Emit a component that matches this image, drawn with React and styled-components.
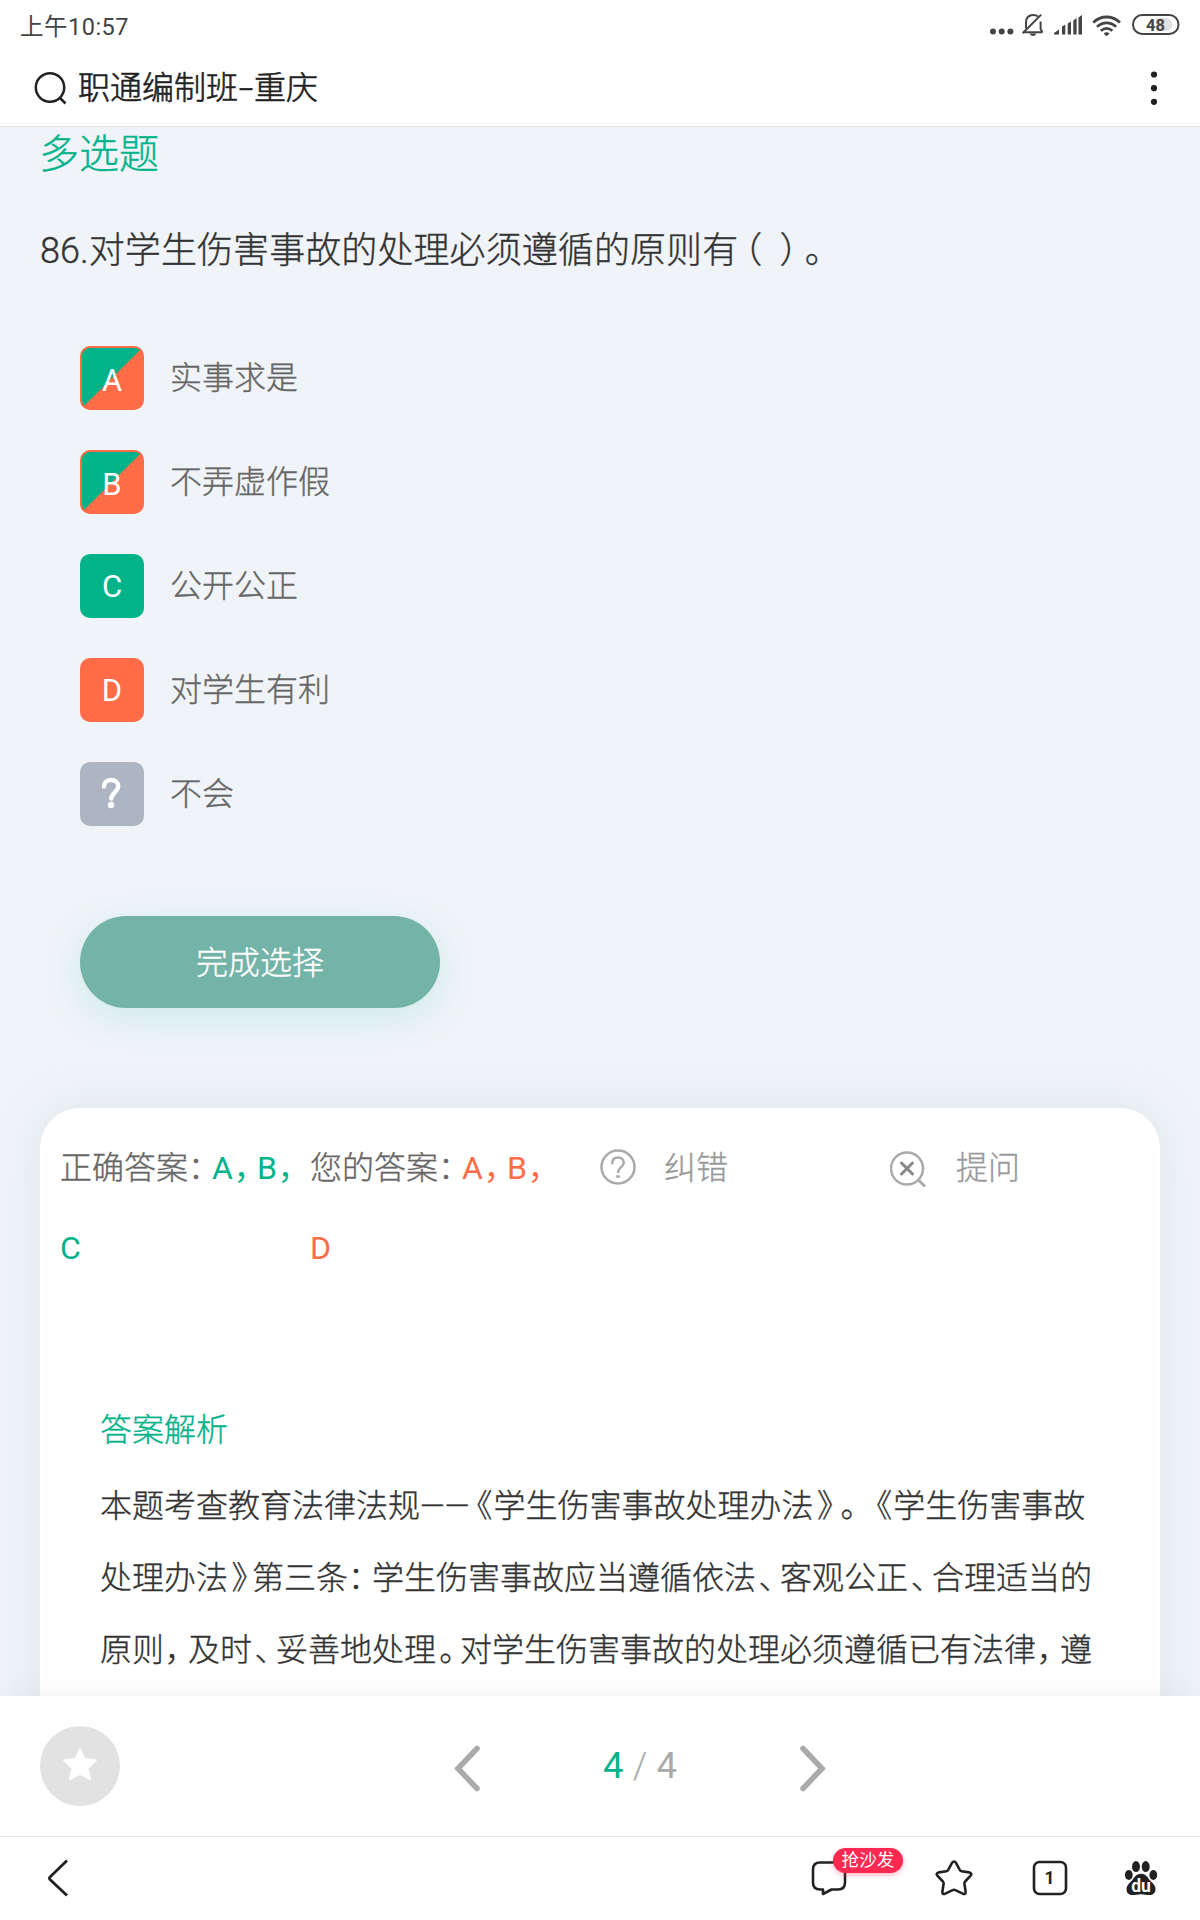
import React from 'react'
import styled, { createGlobalStyle, css } from 'styled-components'

const colors = {
  green: '#02b38a',
  orange: '#ff6c47',
  grey: '#adb5c2',
  bg: '#f0f4f8',
  ink: '#222',
}

const GlobalStyle = createGlobalStyle`
  * {
    box-sizing: border-box;
  }
  body {
    margin: 0;
    background: #fff;
    font-family: Roboto, 'Noto Sans CJK SC', sans-serif;
    font-weight: 300;
    -webkit-text-stroke: 0.35px;
  }
  svg {
    display: block;
    flex: none;
  }
`

const regular = css`
  font-weight: 400;
  -webkit-text-stroke: 0;
`

const Screen = styled.div`
  display: flex;
  flex-direction: column;
  width: 1200px;
  height: 1920px;
  overflow: hidden;
`

// Status bar
const StatusBar = styled.div`
  display: flex;
  align-items: center;
  justify-content: space-between;
  height: 50px;
  padding: 0 20px;
  color: #444;
`

const Clock = styled.span`
  ${regular}
  padding-top: 4px;
  font-size: 23.5px;
  line-height: 30px;
  letter-spacing: 0.5px;
`

// Header
const Header = styled.header`
  display: flex;
  align-items: center;
  height: 77px;
  padding: 0 38px 0 34px;
  border-bottom: 1px solid #e0e1e2;
`

const HeaderTitle = styled.h1`
  flex: 1;
  margin: 0 0 0 11px;
  font-size: 32px;
  font-weight: 300;
  line-height: 48px;
  color: ${colors.ink};
  -webkit-text-stroke: 0.6px;
`

const Dash = styled.span`
  display: inline-block;
  width: 16px;
  text-align: center;
  transform: scaleX(1.6);
`

// Question
const Content = styled.main`
  flex: 1;
  min-height: 0;
  overflow: hidden;
  background: ${colors.bg};
`

const TypeLabel = styled.h2`
  margin: 0;
  padding: 3px 39px 0;
  font-size: 40px;
  font-weight: 300;
  line-height: 50px;
  color: ${colors.green};
`

const Question = styled.p`
  margin: 44px 40px 0;
  font-size: 36px;
  line-height: 54px;
  letter-spacing: 0.08px;
  color: #333;
`

const Options = styled.ul`
  display: flex;
  flex-direction: column;
  gap: 40px;
  margin: 68px 0 0;
  padding: 0 80px;
  list-style: none;
`

const Option = styled.li`
  display: flex;
  align-items: center;
  gap: 26px;
  height: 64px;
  font-size: 32px;
  line-height: 64px;
  color: #666;
`

const markStyles = {
  both: css`
    border: 2px solid ${colors.orange};
    padding-top: 4px;
    background: linear-gradient(135deg, ${colors.green} 49.5%, ${colors.orange} 50.5%);
  `,
  correct: css`
    background: ${colors.green};
  `,
  wrong: css`
    background: ${colors.orange};
  `,
  unknown: css`
    background: ${colors.grey};
  `,
}

const Mark = styled.span`
  ${regular}
  display: flex;
  align-items: center;
  justify-content: center;
  width: 64px;
  height: 64px;
  border-radius: 10px;
  font-size: 31px;
  line-height: normal;
  color: #fff;
  ${({ $state }) => markStyles[$state]}
`

const SubmitButton = styled.button`
  display: block;
  width: 360px;
  height: 92px;
  margin: 90px 0 0 80px;
  padding: 1px 0 0;
  border: 0;
  border-radius: 46px;
  background: #74b3a8;
  box-shadow: 0 10px 40px rgba(2, 179, 138, 0.15);
  font: inherit;
  font-size: 32px;
  line-height: 90px;
  color: #fff;
  -webkit-text-stroke: inherit;
`

// Answer card
const AnswerCard = styled.section`
  height: 700px;
  margin: 100px 40px 0;
  padding: 20px 20px 0;
  border-radius: 40px;
  background: #fff;
  box-shadow: 0 0 50px rgba(150, 170, 180, 0.2);
`

const AnswerRow = styled.div`
  display: grid;
  grid-template-columns: 250px 290px 290px 1fr;
  height: 262px;
  font-size: 32px;
  line-height: 80px;
  color: #666;
`

const AnswerText = styled.div`
  width: 250px;
`

const AnswerValue = styled.span`
  ${regular}
  color: ${({ $color }) => $color};
`

const Action = styled.div`
  display: flex;
  align-items: center;
  gap: 28px;
  height: 80px;
  color: #999;
`

const Analysis = styled.div`
  padding: 0 40px;
  font-size: 32px;
`

const AnalysisTitle = styled.h3`
  margin: 0;
  font-size: 32px;
  font-weight: 300;
  line-height: 80px;
  color: ${colors.green};
`

const AnalysisText = styled.p`
  width: 1000px;
  margin: 0;
  line-height: 72px;
  color: #333;
`

// Bottom bars
const Pager = styled.div`
  position: relative;
  display: flex;
  align-items: center;
  height: 141px;
  padding: 0 40px;
  background: #fff;
  border-bottom: 1px solid #e6e6e6;
  box-shadow: 0 0 30px rgba(0, 0, 0, 0.05);
`

const FavButton = styled.span`
  display: flex;
  align-items: center;
  justify-content: center;
  width: 80px;
  height: 80px;
  margin-right: 333px;
  padding-bottom: 4px;
  border-radius: 50%;
  background: #e2e2e2;
`

const PageCount = styled.span`
  ${regular}
  display: flex;
  justify-content: space-between;
  width: 74px;
  margin: 0 122px;
  font-size: 36.5px;
  line-height: 50px;
  color: #aaa;

  b {
    font-weight: 400;
    color: ${colors.green};
  }

  i {
    font-style: normal;
    font-weight: 300;
  }
`

const NavBar = styled.nav`
  position: relative;
  display: flex;
  align-items: center;
  height: 83px;
  padding: 0 42px 1px 46px;
  background: #fff;
`

const NavItem = styled.span`
  position: relative;
  margin-left: ${({ $gap }) => $gap || 'auto'};
`

const Badge = styled.span`
  ${regular}
  position: absolute;
  top: -12px;
  left: 22px;
  width: 70px;
  height: 25px;
  border-radius: 13px;
  background: #ff2850;
  box-shadow: 0 2px 5px rgba(255, 40, 80, 0.35);
  font-size: 17.6px;
  line-height: 25px;
  text-align: center;
  white-space: nowrap;
  color: #fff;
`

const Punct = styled.span`
  padding-left: ${({ $left }) => $left}em;
  padding-right: ${({ $left }) => 0.25 - $left}em;
  font-feature-settings: 'halt';
`

// Full width punctuation takes three quarters of an em
const leftSpace = {
  '《': 0.22,
  '》': 0.11,
  '（': 0.17,
  '）': 0.15,
  '。': 0.1,
  '，': 0.02,
  '、': 0.08,
  '：': 0,
}

const Text = ({ children }) =>
  children
    .split(/([《》（）。，、：])/)
    .map((part, i) =>
      part in leftSpace ? (
        <Punct key={i} $left={leftSpace[part]}>
          {part}
        </Punct>
      ) : (
        part
      )
    )

// Icons
const StatusIcons = () => (
  <svg width="192" height="26" viewBox="0 0 192 26" fill="#444">
    <circle cx="5" cy="19.500" r="3" />
    <circle cx="13.700" cy="19.500" r="3" />
    <circle cx="22.400" cy="19.500" r="3" />
    <g fill="none" stroke="#444" strokeWidth="2">
      <path d="M36 20.300h18.300M38 16.500V10.500c0-5 3-7.600 7.200-7.600 2 0 3.400.5 4.800 1.700M52.600 9.500v7.500l1.900 3.500" />
      <path d="M34.600 21.300 53.200 2.600" />
    </g>
    <path d="M41.500 21.600h7c-.6 1.600-2 2.300-3.500 2.300s-2.900-.7-3.500-2.300z" />
    <path d="M66 22.500v-1.500l5-3.500v5zM74 22.500v-8l3.300-2v10zM79.700 22.500V11.500l3.300-2v13zM85.300 22.500V8.500l3.300-2.500v16.500zM90.500 22.500V5.500l3.500-2.500v19.500z" />
    <g fill="none" stroke="#444" strokeWidth="3">
      <path d="M105.300 10.500c7.800-7.200 18.700-7.200 26.600 0" />
      <path d="M109 14.800c5.800-5.200 13.500-5.200 19.200 0" strokeWidth="2.700" />
      <path d="M112.800 18.800c3.600-3 8-3 11.600 0" strokeWidth="2.700" />
    </g>
    <path d="M115.600 21.500c1.700-1.600 4.400-1.600 6 0l-3 2.700z" />
    <path d="M168 6h10a6.500 6.500 0 0 1 0 13h-10z" fill="#e0e0e0" />
    <rect x="145" y="3" width="45.500" height="19" rx="9.300" fill="none" stroke="#444" strokeWidth="2" />
    <text x="167.500" y="18.500" fontSize="16.500" fontWeight="700" fontFamily="Roboto" textAnchor="middle">
      48
    </text>
  </svg>
)

const SearchIcon = () => (
  <svg width="33" height="33" viewBox="0 0 33 33" fill="none" stroke={colors.ink} strokeWidth="2.500">
    <circle cx="16" cy="15.500" r="14.200" />
    <path d="m25.500 25.500 6 6" />
  </svg>
)

const MoreIcon = () => (
  <svg width="16" height="36" viewBox="0 0 16 36" fill={colors.ink}>
    <circle cx="8" cy="4.500" r="3.100" />
    <circle cx="8" cy="18.200" r="3.100" />
    <circle cx="8" cy="31.800" r="3.100" />
  </svg>
)

const UnknownIcon = () => (
  <svg width="24" height="34" viewBox="0 0 24 34" fill="none" stroke="#fff" strokeWidth="4.400" strokeLinecap="round">
    <path d="M4 9.500C4.100 5.300 7 3 11 3s7.200 2.600 7.200 6.300c0 5.200-6.600 6.500-7 12.200" />
    <circle cx="11" cy="28" r="3.200" fill="#fff" stroke="none" />
  </svg>
)

const HelpIcon = () => (
  <svg width="36" height="38" viewBox="0 0 36 38" fill="none" stroke="#aaa" strokeWidth="2.500">
    <circle cx="18" cy="18" r="16.500" />
    <path d="M12.300 14.200c0-3.700 2.300-5.700 5.700-5.700s5.700 2 5.700 5.200c0 4.300-5.500 4.600-5.500 9.300" strokeLinecap="round" />
    <path d="M16.200 27.500h3.600" />
  </svg>
)

const AskIcon = () => (
  <svg width="38" height="38" viewBox="0 0 38 38" fill="none" stroke="#aaa" strokeWidth="2.500">
    <circle cx="17" cy="19.500" r="16" />
    <path d="m28.500 31 6.500 6.500" strokeWidth="3" />
    <path d="m11.500 14 11 11m0-11-11 11" stroke="#888" strokeWidth="3" strokeLinecap="round" />
  </svg>
)

const Chevron = ({ right }) => (
  <svg width="28" height="52" viewBox="0 0 28 52" fill="none" stroke="#aaa" strokeWidth="5.500" strokeLinecap="round">
    <path d={right ? 'm4 8.500 19 20-19 20' : 'M24 8.500 5 28.500l19 20'} />
  </svg>
)

const BackIcon = () => (
  <svg width="24" height="40" viewBox="0 0 24 40" fill="none" stroke={colors.ink} strokeWidth="2.800">
    <path d="M21 2.500 4 19q-1.200 1.200 0 2.400L21 37.500" />
  </svg>
)

const SolidStar = () => (
  <svg width="36" height="34" viewBox="0 0 36 34" fill="#fff" stroke="#fff" strokeWidth="1.500" strokeLinejoin="round">
    <path d="m18 1.500 4.700 10.300 11.500 1.400-8.500 7.900 2.700 11.400L18 27l-10.400 5.500 2.700-11.400-8.500-7.900 11.500-1.400z" />
  </svg>
)

const CommentIcon = () => (
  <svg width="36" height="36" viewBox="0 0 36 36" fill="none" stroke={colors.ink} strokeWidth="2.600" strokeLinejoin="round">
    <path d="M9 2.500h18q7 0 7 7v13q0 7-7 7h-6.500L12 34V29.500H9q-7 0-7-7v-13q0-7 7-7z" />
  </svg>
)

const StarIcon = () => (
  <svg width="38" height="36" viewBox="0 0 38 36" fill="none" stroke={colors.ink} strokeWidth="2.600" strokeLinejoin="round">
    <path d="M17 2.800q2-2.600 4 0l3.800 7.200q.5 1 1.700 1.200l7.800 1.200q3.200.8 1.300 3.300l-5.500 5.800q-.8.900-.7 2l1.200 8q.2 3.200-2.800 2.200l-7.500-3.600q-1.300-.6-2.600 0l-7.500 3.600q-3 1-2.800-2.200l1.200-8q.1-1.100-.7-2l-5.500-5.800Q.5 13.200 3.700 12.400l7.800-1.200q1.200-.2 1.700-1.200z" />
  </svg>
)

const TabsIcon = () => (
  <svg width="36" height="36" viewBox="0 0 36 36" fill="none" stroke={colors.ink} strokeWidth="2.600">
    <rect x="2" y="2" width="32" height="32" rx="5.500" />
    <text x="17.500" y="24" fontSize="17.500" fontWeight="700" fontFamily="Roboto" textAnchor="middle" fill={colors.ink} stroke="none">
      1
    </text>
  </svg>
)

const PawIcon = () => (
  <svg width="34" height="36" viewBox="0 0 34 36" fill={colors.ink}>
    <ellipse cx="4.800" cy="15" rx="3.900" ry="5" />
    <ellipse cx="12" cy="6.600" rx="4" ry="5.500" />
    <ellipse cx="21.700" cy="6.600" rx="4" ry="5.500" />
    <ellipse cx="29.300" cy="15" rx="3.900" ry="5" />
    <path d="M17 13.800c5.500 0 6.500 4 9.500 7.200s5 4.500 5 8c0 4-2.500 6-6 6-3.200 0-5-.8-8.500-.8s-5.300.8-8.500.8c-3.500 0-6-2-6-6 0-3.500 2-4.800 5-8s4-7.200 9.500-7.200z" />
    <text x="17" y="32" fontSize="17.500" fontWeight="700" fontFamily="Roboto" textAnchor="middle" fill="#fff">
      du
    </text>
  </svg>
)

const options = [
  { mark: 'A', state: 'both', label: '实事求是' },
  { mark: 'B', state: 'both', label: '不弄虚作假' },
  { mark: 'C', state: 'correct', label: '公开公正' },
  { mark: 'D', state: 'wrong', label: '对学生有利' },
  { mark: null, state: 'unknown', label: '不会' },
]

const App = () => {
  return (
    <Screen>
      <GlobalStyle />
      <StatusBar>
        <Clock>上午10:57</Clock>
        <StatusIcons />
      </StatusBar>
      <Header>
        <SearchIcon />
        <HeaderTitle>
          职通编制班<Dash>-</Dash>重庆
        </HeaderTitle>
        <MoreIcon />
      </Header>

      <Content>
        <TypeLabel>多选题</TypeLabel>
        <Question>
          <Text>86.对学生伤害事故的处理必须遵循的原则有（ ）。</Text>
        </Question>
        <Options>
          {options.map(({ mark, state, label }) => (
            <Option key={label}>
              <Mark $state={state}>{mark || <UnknownIcon />}</Mark>
              {label}
            </Option>
          ))}
        </Options>
        <SubmitButton>完成选择</SubmitButton>

        <AnswerCard>
          <AnswerRow>
            <AnswerText>
              <Text>正确答案：</Text>
              <AnswerValue $color={colors.green}>
                <Text>A，B，C</Text>
              </AnswerValue>
            </AnswerText>
            <AnswerText>
              <Text>您的答案：</Text>
              <AnswerValue $color={colors.orange}>
                <Text>A，B，D</Text>
              </AnswerValue>
            </AnswerText>
            <Action>
              <HelpIcon />
              纠错
            </Action>
            <Action>
              <AskIcon />
              提问
            </Action>
          </AnswerRow>
          <Analysis>
            <AnalysisTitle>答案解析</AnalysisTitle>
            <AnalysisText>
              <Text>
                本题考查教育法律法规——《学生伤害事故处理办法》。 《学生伤害事故处理办法》第三条：学生伤害事故应当遵循依法、客观公正、合理适当的原则，及时、妥善地处理。对学生伤害事故的处理必须遵循已有法律，遵
              </Text>
            </AnalysisText>
          </Analysis>
        </AnswerCard>
      </Content>

      <Pager>
        <FavButton>
          <SolidStar />
        </FavButton>
        <Chevron />
        <PageCount>
          <b>4</b>
          <i>/</i>
          <span>4</span>
        </PageCount>
        <Chevron right />
      </Pager>
      <NavBar>
        <BackIcon />
        <NavItem>
          <CommentIcon />
          <Badge>抢沙发</Badge>
        </NavItem>
        <NavItem $gap="88px">
          <StarIcon />
        </NavItem>
        <NavItem $gap="59px">
          <TabsIcon />
        </NavItem>
        <NavItem $gap="56px">
          <PawIcon />
        </NavItem>
      </NavBar>
    </Screen>
  )
}

export default App
